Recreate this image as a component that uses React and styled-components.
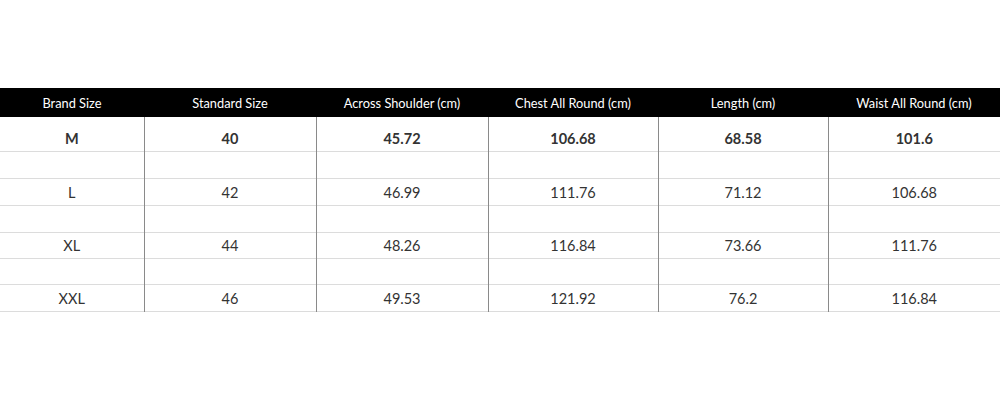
import React from 'react';
import styled, { createGlobalStyle } from 'styled-components';

const Global = createGlobalStyle`
  body {
    margin: 0;
    background: #fff;
    font-family: Lato, "Open Sans", sans-serif;
  }
`;

const Wrap = styled.div`
  padding-top: 88px;
`;

const Table = styled.table`
  width: 1000px;
  border-collapse: collapse;
  table-layout: fixed;
`;

const HeadRow = styled.tr`
  background: #000;
  height: 29px;
`;

const Th = styled.th`
  color: #fff;
  font-weight: 400;
  font-size: 12.8px;
  padding: 1px 0 0;
  text-align: center;
  vertical-align: middle;
`;

const Row = styled.tr`
  height: ${p => p.h}px;
  border-bottom: 1.5px solid #dcdcdc;
`;

const Td = styled.td`
  padding: ${p => (p.lead ? '9px 0 0' : '1px 0 0')};
  text-align: center;
  vertical-align: middle;
  font-size: 14.5px;
  font-weight: ${p => (p.bold ? 700 : 400)};
  color: #333;
  border-left: ${p => (p.first ? 'none' : '1px solid #8a8a8a')};
`;

const cols = [144, 172, 172, 170, 170, 172];
const heads = ['Brand Size', 'Standard Size', 'Across Shoulder (cm)', 'Chest All Round (cm)', 'Length (cm)', 'Waist All Round (cm)'];

const rows = [
  { h: 34, cells: ['M', '40', '45.72', '106.68', '68.58', '101.6'], bold: true },
  { h: 27, cells: ['', '', '', '', '', ''] },
  { h: 27, cells: ['L', '42', '46.99', '111.76', '71.12', '106.68'] },
  { h: 27, cells: ['', '', '', '', '', ''] },
  { h: 26, cells: ['XL', '44', '48.26', '116.84', '73.66', '111.76'] },
  { h: 26, cells: ['', '', '', '', '', ''] },
  { h: 27, cells: ['XXL', '46', '49.53', '121.92', '76.2', '116.84'] },
];

export default function App() {
  return (
    <Wrap>
      <Global />
      <Table>
        <colgroup>
          {cols.map((w, i) => <col key={i} style={{ width: w }} />)}
        </colgroup>
        <thead>
          <HeadRow>
            {heads.map(h => <Th key={h}>{h}</Th>)}
          </HeadRow>
        </thead>
        <tbody>
          {rows.map((r, i) => (
            <Row key={i} h={r.h}>
              {r.cells.map((c, j) => (
                <Td key={j} first={j === 0} bold={r.bold} lead={r.bold}>{c}</Td>
              ))}
            </Row>
          ))}
        </tbody>
      </Table>
    </Wrap>
  );
}
